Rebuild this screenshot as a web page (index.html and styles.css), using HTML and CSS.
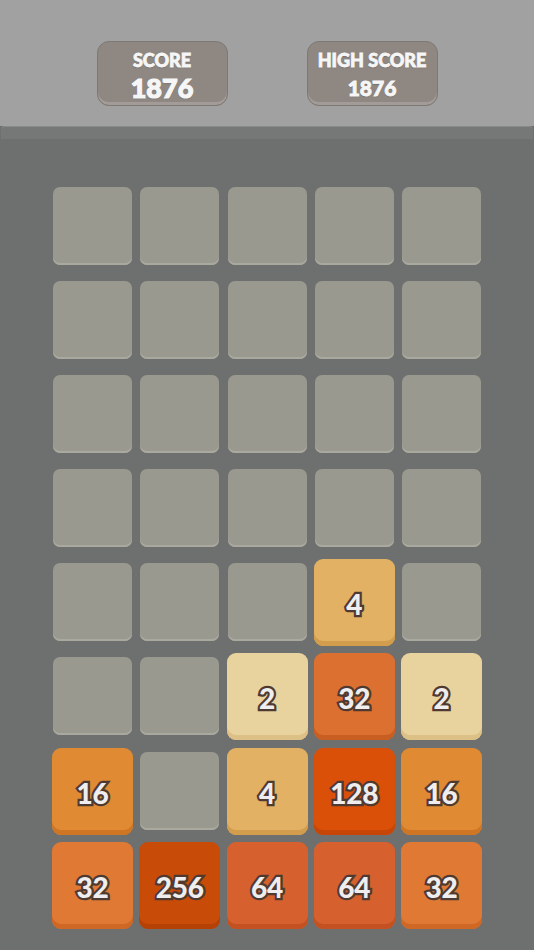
FILE: index.html
```html
<!DOCTYPE html>
<html lang="en">
<head>
  <meta charset="UTF-8" />
  <meta name="viewport" content="width=device-width, initial-scale=1.0" />
  <title>2048</title>
  <link rel="stylesheet" href="styles.css">
</head>
<body>
  <header class="top">
    <div class="score-box">
      <span class="score-label">SCORE</span>
      <span class="score-value">1876</span>
    </div>
    <div class="score-box">
      <span class="score-label">HIGH SCORE</span>
      <span class="score-value small">1876</span>
    </div>
  </header>

  <div class="strip"></div>

  <main class="board">
    <div class="grid">
      <!-- row 1 -->
      <div class="cell"></div><div class="cell"></div><div class="cell"></div><div class="cell"></div><div class="cell"></div>
      <!-- row 2 -->
      <div class="cell"></div><div class="cell"></div><div class="cell"></div><div class="cell"></div><div class="cell"></div>
      <!-- row 3 -->
      <div class="cell"></div><div class="cell"></div><div class="cell"></div><div class="cell"></div><div class="cell"></div>
      <!-- row 4 -->
      <div class="cell"></div><div class="cell"></div><div class="cell"></div><div class="cell"></div><div class="cell"></div>
      <!-- row 5 -->
      <div class="cell"></div><div class="cell"></div><div class="cell"></div>
      <div class="cell tile t4">4</div>
      <div class="cell"></div>
      <!-- row 6 -->
      <div class="cell"></div><div class="cell"></div>
      <div class="cell tile t2">2</div>
      <div class="cell tile t32">32</div>
      <div class="cell tile t2">2</div>
      <!-- row 7 -->
      <div class="cell tile t16">16</div>
      <div class="cell"></div>
      <div class="cell tile t4">4</div>
      <div class="cell tile t128">128</div>
      <div class="cell tile t16">16</div>
      <!-- row 8 -->
      <div class="cell tile t32b">32</div>
      <div class="cell tile t256">256</div>
      <div class="cell tile t64">64</div>
      <div class="cell tile t64">64</div>
      <div class="cell tile t32b">32</div>
    </div>
  </main>
</body>
</html>
```

FILE: styles.css
```css
html, body {
  margin: 0;
  height: 100%;
}
body {
  background: #6e6f6f;
  font-family: Lato, 'Open Sans', sans-serif;
  overflow: hidden;
}

/* Barra punteggi */
.top {
  height: 126px;
  background: #a1a1a1;
  display: flex;
  justify-content: center;
  align-items: flex-start;
  gap: 79px;
  padding-top: 41px;
  box-sizing: border-box;
}
.score-box {
  width: 131px;
  height: 65px;
  box-sizing: border-box;
  background: #8e8782;
  border: 1px solid #7f7975;
  border-radius: 12px;
  box-shadow: inset 0 -3px 0 #a29b97;
  display: flex;
  flex-direction: column;
  align-items: center;
  color: #f6f6f6;
  -webkit-text-stroke: 0.8px #f6f6f6;
  text-shadow: 0 1px 1px rgba(0,0,0,0.25);
}
.score-label {
  font-size: 18px;
  font-weight: 900;
  margin-top: 7px;
  line-height: 22px;
}
.score-value {
  font-size: 27px;
  font-weight: 900;
  margin-top: 2px;
  line-height: 30px;
  -webkit-text-stroke: 1.2px #f6f6f6;
}
.score-value.small {
  font-size: 21px;
  -webkit-text-stroke: 0.9px #f6f6f6;
}

.strip {
  height: 12px;
  margin: 0 1px;
  background: #767777;
  border-top: 1px solid #888989;
  border-radius: 4px 4px 0 0;
}

/* Griglia */
.board {
  padding: 48px 0 0 53px;
}
.grid {
  display: grid;
  grid-template-columns: repeat(5, 79px);
  grid-auto-rows: 78px;
  column-gap: 8.25px;
  row-gap: 16.1px;
}
.cell {
  background: #9a998f;
  border-radius: 7px;
  box-shadow: inset 0 -2px 0 #aaa99f;
}
.tile {
  margin: -4px -1px -5px;
  border-radius: 9px;
  padding-top: 3px;
  display: flex;
  align-items: center;
  justify-content: center;
  font-size: 28px;
  font-weight: 900;
  color: #efeded;
  -webkit-text-stroke: 4.5px #4f3a32;
  paint-order: stroke fill;
  letter-spacing: -0.3px;
}
.t2 {
  background: #e8d39f;
  box-shadow: inset 0 -5px 0 #dcc085;
}
.t4 {
  background: #e2b163;
  box-shadow: inset 0 -5px 0 #d29d4c;
}
.t16 {
  background: #e08a33;
  box-shadow: inset 0 -5px 0 #cf7624;
}
.t32 {
  background: #dc7030;
  box-shadow: inset 0 -5px 0 #c85e22;
}
.t32b {
  background: #e07934;
  box-shadow: inset 0 -5px 0 #cf6725;
}
.t64 {
  background: #d6612e;
  box-shadow: inset 0 -5px 0 #c35122;
}
.t128 {
  background: #db5009;
  box-shadow: inset 0 -5px 0 #c74507;
}
.t256 {
  background: #c84b07;
  box-shadow: inset 0 -5px 0 #b64106;
}
```
